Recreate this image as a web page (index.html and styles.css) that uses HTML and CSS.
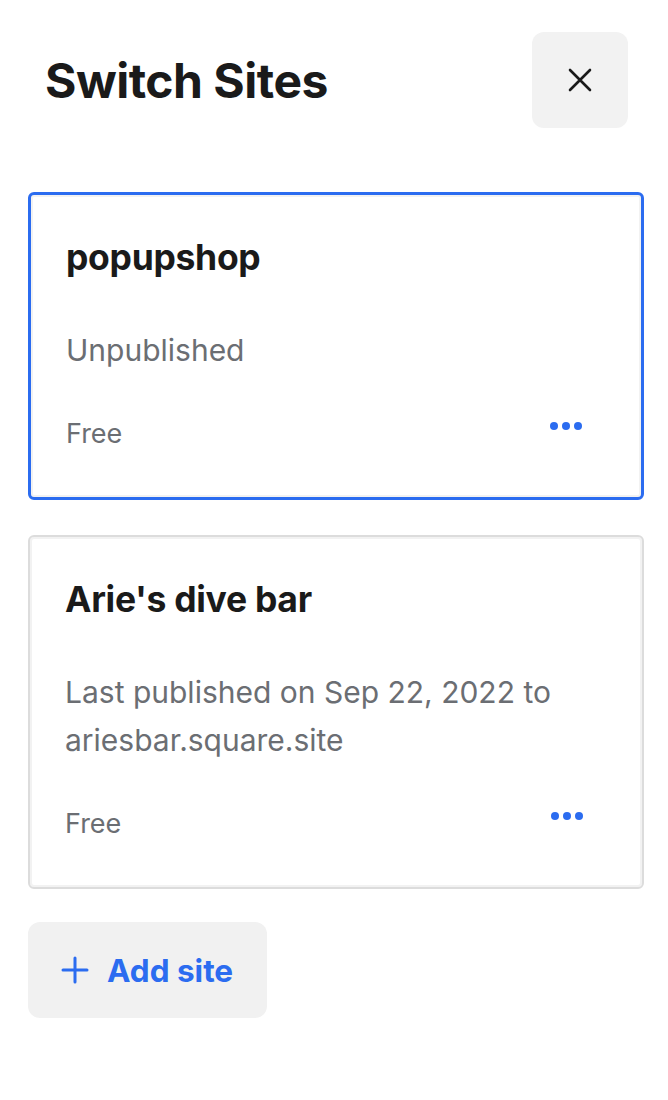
FILE: index.html
```html
<!DOCTYPE html>
<html>
<head>
  <title>Switch Sites</title>
  <link rel="stylesheet" href="styles.css">
</head>
<body>
  <div class="header">
    <h1>Switch Sites</h1>
    <button class="close-btn" aria-label="Close">
      <svg width="28" height="28" viewBox="0 0 28 28"><path d="M4 4 L24 24 M24 4 L4 24" stroke="#1a1a1a" stroke-width="2.6" stroke-linecap="round"/></svg>
    </button>
  </div>

  <div class="site-list">
    <div class="site-card selected">
      <div class="site-name">popupshop</div>
      <div class="site-status">Unpublished</div>
      <div class="site-footer">
        <span class="plan">Free</span>
        <span class="more"><i></i><i></i><i></i></span>
      </div>
    </div>

    <div class="site-card">
      <div class="site-name">Arie's dive bar</div>
      <div class="site-status">Last published on Sep 22, 2022 to ariesbar.square.site</div>
      <div class="site-footer">
        <span class="plan">Free</span>
        <span class="more"><i></i><i></i><i></i></span>
      </div>
    </div>
  </div>

  <button class="add-site">
    <svg width="30" height="30" viewBox="0 0 30 30"><path d="M15 3 V27 M3 15 H27" stroke="#2b6cf0" stroke-width="3" stroke-linecap="round"/></svg>
    <span>Add site</span>
  </button>
</body>
</html>
```

FILE: styles.css
```css
body {
  font-family: Inter, "Noto Sans", sans-serif;
  background: #fff;
  color: #1a1a1a;
  margin: 0;
  padding: 32px 24px 0 28px;
}

.header {
  display: flex;
  justify-content: space-between;
  align-items: center;
  padding: 0 16px 0 17px;
}

h1 {
  margin: 0;
  font-size: 48px;
  font-weight: 700;
  letter-spacing: -0.5px;
}

.close-btn {
  width: 96px;
  height: 96px;
  border: none;
  border-radius: 12px;
  background: #f2f2f2;
  display: flex;
  align-items: center;
  justify-content: center;
  cursor: pointer;
}

.site-list {
  margin-top: 64px;
  display: flex;
  flex-direction: column;
  gap: 35px;
}

.site-card {
  border: 2px solid #dcdcdc;
  box-shadow: inset 0 0 0 2px #f2f2f2;
  border-radius: 6px;
  padding: 43px 35px 48px 35px;
}

.site-card.selected {
  border: 3px solid #2b6cf0;
}

.site-name {
  font-size: 35.5px;
  font-weight: 700;
  line-height: 40px;
  letter-spacing: -0.3px;
}

.site-status {
  margin-top: 48px;
  font-size: 30px;
  line-height: 48px;
  color: #6b6e73;
}

.site-footer {
  margin-top: 43px;
  display: flex;
  justify-content: space-between;
  align-items: center;
  height: 32px;
}

.plan {
  font-size: 27px;
  color: #6b6e73;
}

.more {
  display: flex;
  gap: 4px;
  margin-right: 24px;
  margin-bottom: 14px;
}

.more i {
  width: 8px;
  height: 8px;
  border-radius: 50%;
  background: #2b6cf0;
}

.add-site {
  margin-top: 33px;
  width: 239px;
  height: 96px;
  border: none;
  border-radius: 12px;
  background: #f1f1f1;
  display: flex;
  align-items: center;
  gap: 17px;
  padding: 0 0 0 32px;
  font-family: Inter, "Noto Sans", sans-serif;
  font-size: 31.5px;
  font-weight: 700;
  color: #2b6cf0;
  cursor: pointer;
}
```
